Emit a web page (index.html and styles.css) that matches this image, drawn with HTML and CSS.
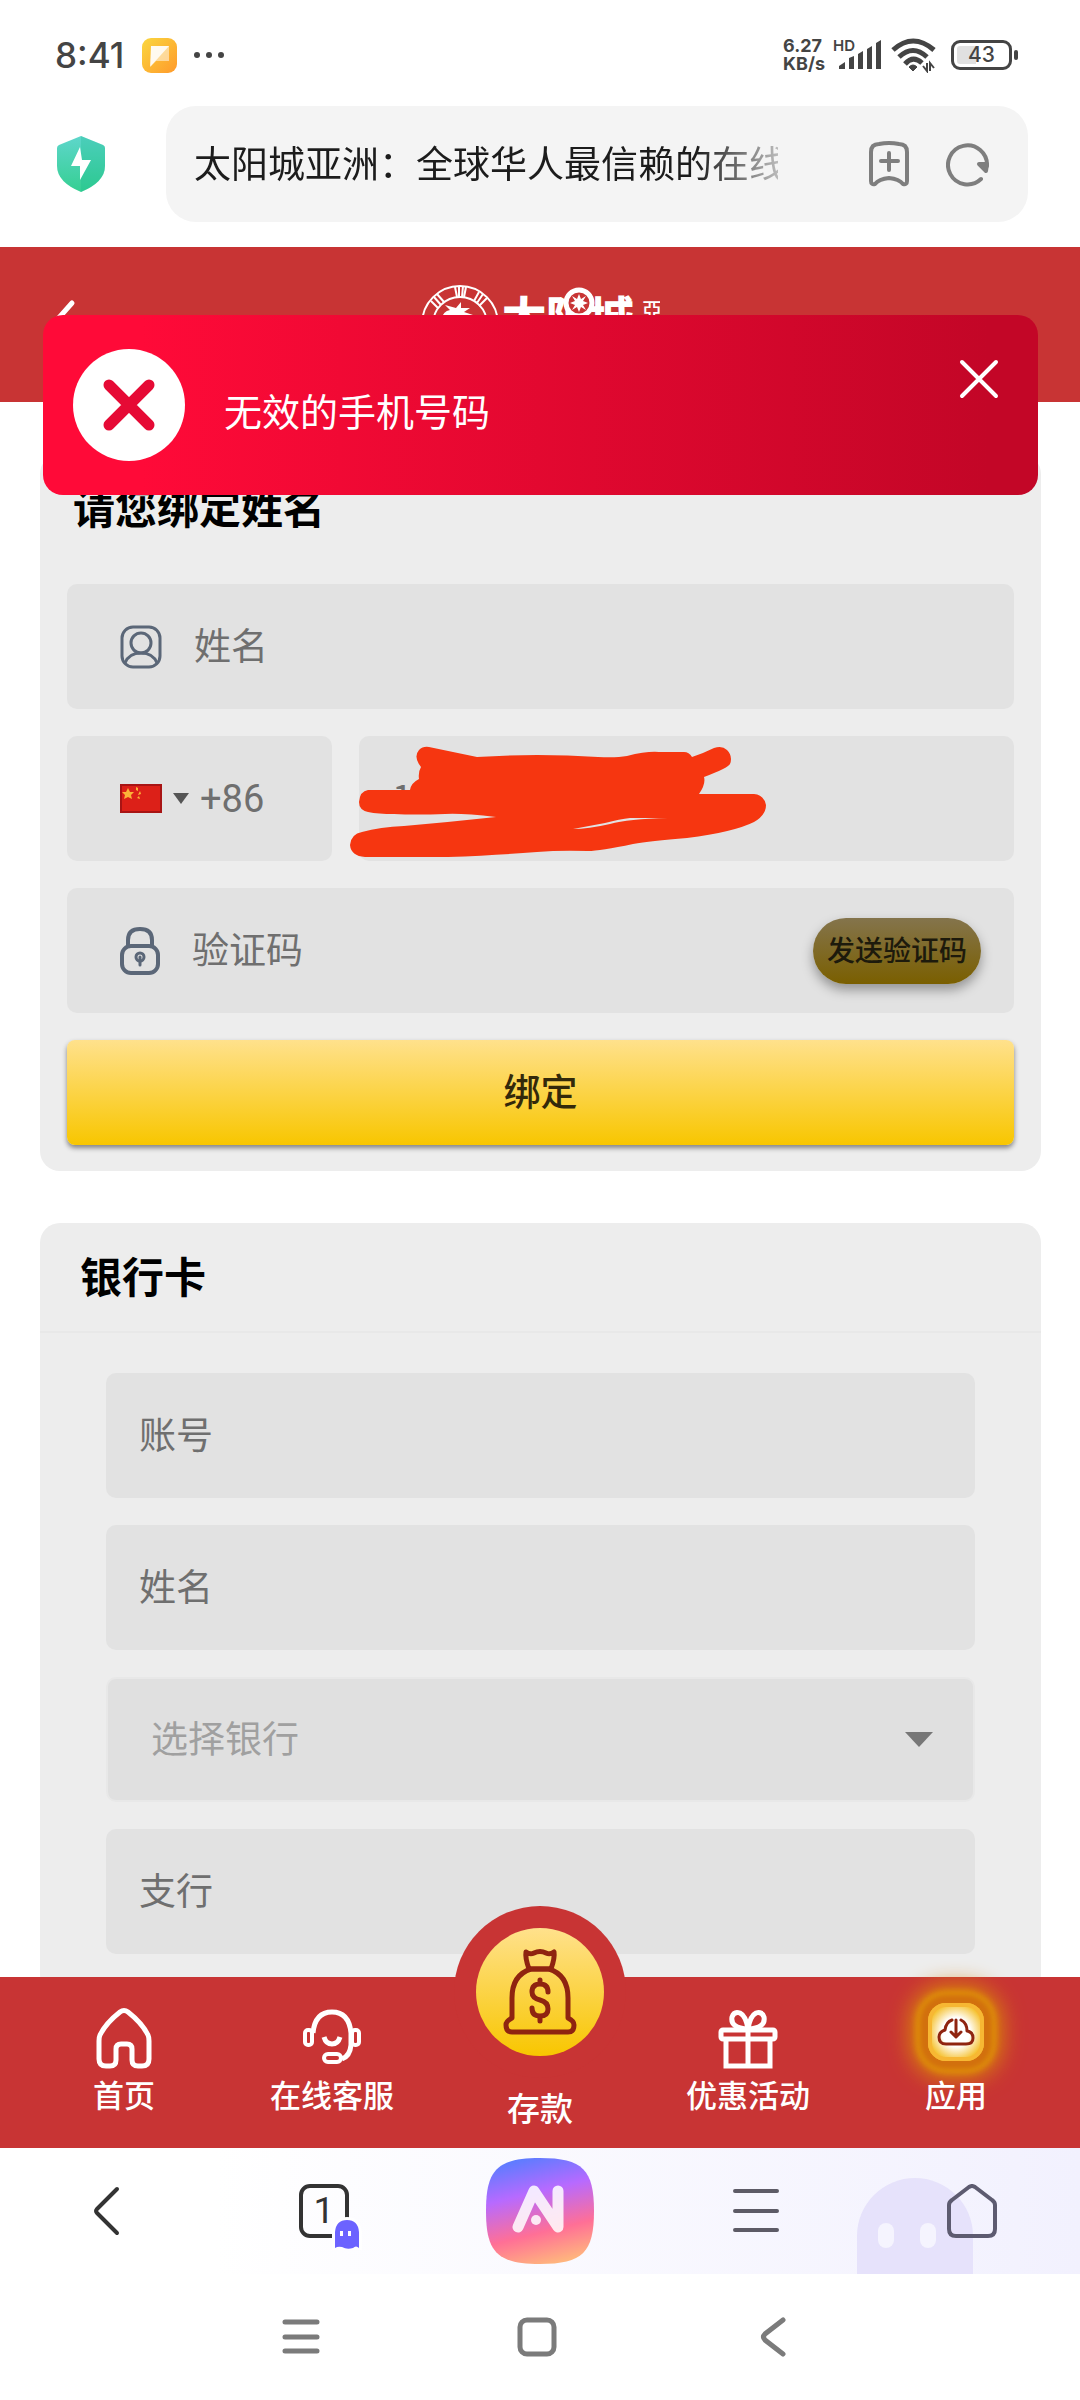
FILE: index.html
```
<!DOCTYPE html>
<html lang="zh-CN">

<head>
    <meta charset="utf-8">
    <meta name="viewport" content="width=device-width, initial-scale=1">
    <title>太阳城亚洲</title>
    <link rel="stylesheet" href="styles.css">
</head>

<body>
    <div class="status">
        <span class="time">8:41</span>
        <svg class="app-badge" width="35" height="35" viewBox="0 0 35 35">
            <defs>
                <linearGradient id="orange" x1="0" y1="0" x2="1" y2="1">
                    <stop offset="0" stop-color="#fad73f" />
                    <stop offset="1" stop-color="#ff9a2b" />
                </linearGradient>
            </defs>
            <rect width="35" height="35" rx="9" fill="url(#orange)" />
            <path d="M9 8h18v15H14L9 28z" fill="#fff" opacity=".5" />
            <path d="M9 8h18L8 29z" fill="#fff" opacity=".85" />
        </svg>
        <svg width="30" height="8" viewBox="0 0 30 8" fill="#444">
            <circle cx="3" cy="4" r="3" />
            <circle cx="15" cy="4" r="3" />
            <circle cx="27" cy="4" r="3" />
        </svg>
        <div class="status-right">
            <div class="speed"><span>6.27</span><span>KB/s</span></div>
            <svg class="signal" width="50" height="34" viewBox="0 0 50 34" fill="#444">
                <text class="hd" x="0" y="13">HD</text>
                <path d="M6 31v-3l6-4v7zM16 31V20l5-2v13zM25 31V16l5-3v18zM34 31V11l5-3v23zM43 31V5l5-3v29z" />
            </svg>
            <svg width="46" height="36" viewBox="0 0 46 36" fill="none" stroke="#444" stroke-width="5">
                <path d="M2 13Q22-5 43 13M8 20Q22 7 36 20M14 27Q22 18 31 26" />
                <path d="M18 30q4-4 8 0l-4 4z" fill="#444" stroke-width="1" />
                <path d="M36 26v8l-4-5M39 34v-8l4 5" stroke-width="2" />
            </svg>
            <div class="battery">43</div>
        </div>
    </div>

    <div class="address">
        <svg width="50" height="58" viewBox="0 0 50 58">
            <defs>
                <linearGradient id="green" x1="0" y1="0" x2="0" y2="1">
                    <stop offset="0" stop-color="#5ed6cb" />
                    <stop offset="1" stop-color="#35cf92" />
                </linearGradient>
            </defs>
            <path d="M25 1l22 9q2 1 2 3v18q0 16-24 26Q1 47 1 31V13q0-2 2-3z" fill="url(#green)" />
            <path d="M25 1l22 9q2 1 2 3v18q0 16-24 26z" fill="#12b98a" opacity=".25" />
            <path d="M24 12L15 31h9v14l11-20h-9z" fill="#fff" />
        </svg>
        <div class="address-box">
            <input class="address-text" type="text" aria-label="地址" value="太阳城亚洲：全球华人最信赖的在线">
            <button class="icon-btn" aria-label="收藏">
                <svg width="40" height="46" viewBox="0 0 40 46" fill="none" stroke="#7e7e7e" stroke-width="4" stroke-linecap="round" stroke-linejoin="round">
                    <path d="M10 3Q20 1 30 3q8 0 8 8v29q0 4-4 3-4-5-14-6-10 1-14 6-4 1-4-3V11q0-8 8-8zM20 12v17M12 20h17" />
                </svg>
            </button>
            <button class="icon-btn" aria-label="刷新">
                <svg width="44" height="46" viewBox="0 0 44 46" fill="none" stroke="#7e7e7e" stroke-width="4" stroke-linecap="round">
                    <path d="M35 38A19.500 19.500 0 1 1 41 25" />
                    <path d="M33 23l8 0-1 7z" fill="#7e7e7e" stroke-linejoin="round" />
                </svg>
            </button>
        </div>
    </div>

    <main class="page">
        <header class="site-header">
            <button class="icon-btn site-back" aria-label="返回">
                <svg width="24" height="44" viewBox="0 0 24 44" fill="none" stroke="#fff" stroke-width="5" stroke-linecap="round">
                    <path d="M20 4L4 22l16 18" />
                </svg>
            </button>
            <svg class="site-logo" width="240" height="80" viewBox="0 0 240 80">
                <g fill="none" stroke="#fff">
                    <circle cx="40" cy="40" r="38" stroke-width="2" />
                    <circle cx="40" cy="40" r="27" stroke-width="2" />
                    <path d="M35 3l2 10M39 2v11M43 2l-1 11M46 3l-2 10M14 13l7 8M17 10l7 8M11 17l7 7M59 8l-5 9M63 10l-6 9M67 14l-8 8" stroke-width="2" />
                </g>
                <path d="M21 36q2-9 9-10l-5-5 11 3 5-6 0 6 9 0-6 4 9 3 5 8-10-4-3 5-8-6-4 5-5-7z" fill="#fff" />
                <text class="logo-main" x="82" y="50">太阳城</text>
                <circle cx="159" cy="19" r="13" fill="#c83434" stroke="#fff" stroke-width="5" />
                <path d="M159 10l2 5 5-3-3 5 5 2-5 2 3 5-5-3-2 5-2-5-5 3 3-5-5-2 5-2-3-5 5 3z" fill="#fff" />
                <text class="logo-side" x="222" y="34">亞</text>
            </svg>
            <div class="toast" role="alert">
                <svg width="112" height="112" viewBox="0 0 112 112">
                    <circle cx="56" cy="56" r="56" fill="#fff" />
                    <path d="M36 36l40 40M76 36L36 76" stroke="#e60a35" stroke-width="11" stroke-linecap="round" />
                </svg>
                <span class="toast-text">无效的手机号码</span>
                <button class="icon-btn toast-close" aria-label="关闭">
                    <svg width="40" height="40" viewBox="0 0 40 40" stroke="#fff" stroke-width="4" stroke-linecap="round">
                        <path d="M3 3l34 34M37 3L3 37" />
                    </svg>
                </button>
            </div>
        </header>

        <section class="card bind">
            <h2>请您绑定姓名</h2>
            <form class="fields">
                <label class="field with-icon">
                    <svg width="42" height="44" viewBox="0 0 42 44" fill="none" stroke="#5b6778" stroke-width="3">
                        <rect x="2" y="2" width="38" height="40" rx="11" />
                        <ellipse cx="21" cy="18" rx="10" ry="10" />
                        <path d="M5 38q4-10 16-10t16 10" />
                    </svg>
                    <input type="text" aria-label="姓名" placeholder="姓名">
                </label>
                <div class="phone-row">
                    <button type="button" class="field country" aria-label="国家代码 +86">
                        <svg width="42" height="29" viewBox="0 0 42 29">
                            <rect width="42" height="29" fill="#a81414" />
                            <rect x="2" y="2" width="38" height="25" fill="#dc2018" />
                            <path d="M8 4l2 4h4l-3 3 1 4-4-2-4 2 1-4-3-3h4zM16 3l2 1v3l-2-1zM20 7l1 3-3 1zM19 12l1 3-3-1z" fill="#fcb338" />
                        </svg>
                        <svg width="16" height="11" viewBox="0 0 16 11"><path d="M0 0h16l-8 11z" fill="#555" /></svg>
                        <span class="code">+86</span>
                    </button>
                    <div class="field phone">
                        <input type="tel" aria-label="手机号码" value="1">
                        <svg class="scribble" width="420" height="124" viewBox="350 736 420 124">
                            <path fill="#f63610" fill-rule="evenodd" d="M419 750Q423 746 429 747L477 757Q537 753 598 757Q616 758 627 756Q647 751 659 752H684Q689 752 692 757Q704 753 714 748Q722 745 727 750Q733 756 730 764Q728 768 704 777Q706 784 699 794H754Q764 795 766 805Q766 815 754 822Q734 832 687 838Q650 841 633 844Q600 851 588 851Q560 850 537 852Q500 855 448 857H365Q351 856 350 845Q351 834 362 832Q380 827 404 826Q450 822 496 817Q462 813 445 814Q415 815 394 814Q378 814 368 812Q359 810 359 802Q360 791 368 790H410Q411 783 419 779Q418 772 421 767Q413 757 419 750ZM573 829Q588 829 610 824Q628 819 668 818H630Q620 819 605 823Z" />
                        </svg>
                    </div>
                </div>
                <div class="field with-icon">
                    <svg width="40" height="48" viewBox="0 0 40 48" fill="none" stroke="#5b6778" stroke-width="4">
                        <rect x="2" y="19" width="36" height="27" rx="9" />
                        <path d="M8 19v-6Q8 2 20 2t12 11v6" />
                        <path d="M20 30v8" stroke-linecap="round" stroke-width="3" />
                        <circle cx="20" cy="30" r="4" stroke-width="3" />
                    </svg>
                    <input type="text" aria-label="验证码" placeholder="验证码">
                    <button type="button" class="send">发送验证码</button>
                </div>
                <button type="button" class="submit">绑定</button>
            </form>
        </section>

        <section class="card bank">
            <h2>银行卡</h2>
            <form class="fields">
                <div class="field"><input type="text" aria-label="账号" placeholder="账号"></div>
                <div class="field"><input type="text" aria-label="姓名" placeholder="姓名"></div>
                <div class="field bank-select">
                    <select aria-label="选择银行">
                        <option>选择银行</option>
                    </select>
                    <svg width="28" height="15" viewBox="0 0 28 15"><path d="M0 0h28L14 15z" fill="#777" /></svg>
                </div>
                <div class="field"><input type="text" aria-label="支行" placeholder="支行"></div>
            </form>
        </section>
    </main>

    <nav class="tabs">
        <a href="#home">
            <svg width="60" height="62" viewBox="0 0 60 62" fill="none" stroke="#fff" stroke-width="5" stroke-linejoin="round">
                <path d="M26 5q4-3 8 0 14 11 20 23 1 2 1 6v18q0 7-7 7h-4q-6 0-6-6V42q0-5-5-5h-6q-5 0-5 5v11q0 6-6 6h-4q-7 0-7-7V34q0-4 1-6Q12 16 26 5z" />
            </svg>
            <span>首页</span>
        </a>
        <a href="#service">
            <svg width="60" height="62" viewBox="0 0 60 62" fill="none" stroke="#fff" stroke-width="4">
                <path d="M11 26Q13 5 30 5t19 21v12q-1 11-9 14" stroke-width="5" />
                <rect x="3" y="23" width="7" height="15" rx="3" />
                <rect x="50" y="23" width="7" height="15" rx="3" />
                <path d="M22 30q2 7 8 7t8-7" stroke-width="5" />
                <rect x="22" y="47" width="17" height="8" rx="4" />
            </svg>
            <span>在线客服</span>
        </a>
        <a href="#deposit" class="deposit">
            <span class="bump">
                <svg width="128" height="128" viewBox="0 0 128 128" fill="none" stroke="#8f2410" stroke-width="5" stroke-linecap="round" stroke-linejoin="round">
                    <path d="M53 41Q49 30 50 24q4 3 8 1 6-3 12 0 4 2 8-1 1 6-3 17M55 41h18" />
                    <path d="M55 41Q36 47 36 70v20q-6 3-6 7 0 7 6 7h56q6 0 6-7 0-4-6-7V70q0-23-19-29z" />
                    <path d="M72 64q0-8-8-8t-8 8q0 6 8 8t8 9q0 7-8 7t-8-8M64 52v4M64 88v5" />
                </svg>
            </span>
            <span>存款</span>
        </a>
        <a href="#offers">
            <svg width="60" height="62" viewBox="0 0 60 62" fill="none" stroke="#fff" stroke-width="5">
                <rect x="3" y="23" width="54" height="9" rx="2" />
                <path d="M8 32v27h44V32M30 23v36M30 22Q12 21 14 10q2-6 8-4 6 3 8 16Q32 9 38 6q6-2 8 4 2 11-16 12z" />
            </svg>
            <span>优惠活动</span>
        </a>
        <a href="#apps">
            <span class="apps">
                <svg width="38" height="30" viewBox="0 0 38 30" fill="none" stroke="#8f2410" stroke-width="3" stroke-linecap="round" stroke-linejoin="round">
                    <path d="M15 3Q9 5 8 13q-6 2-6 7 0 7 7 7h20q7 0 7-6t-6-7q0-8-6-11" />
                    <path d="M19 3v16M14 15l5 5 5-5" />
                </svg>
            </span>
            <span>应用</span>
        </a>
    </nav>

    <div class="browser-bar">
        <svg class="watermark" width="116" height="96" viewBox="0 0 116 96">
            <path d="M0 96V58a58 58 0 0 1 116 0v38z" fill="#e6e2fb" />
            <rect x="21" y="45" width="16" height="25" rx="8" fill="#f5f4fe" />
            <rect x="63" y="45" width="16" height="25" rx="8" fill="#f5f4fe" />
        </svg>
        <button class="icon-btn" aria-label="后退">
            <svg width="28" height="52" viewBox="0 0 28 52" fill="none" stroke="#333" stroke-width="4" stroke-linecap="round">
                <path d="M23 4L3 24q-2 2 0 4l20 20" />
            </svg>
        </button>
        <button class="icon-btn tab-count" aria-label="标签页 1">
            <span>1</span>
            <svg width="30" height="34" viewBox="0 0 30 34">
                <path d="M0 34V16Q2 1 15 1t15 15v18z" fill="#fff" />
                <path d="M3 32V16Q4 4 15 4t12 12v16q-3-3-6 0-6 2-11-1-4-1-7 1z" fill="#6c63ff" />
                <path d="M8 15h3v5H8zM16 15h3v5h-3z" fill="#fff" />
            </svg>
        </button>
        <button class="icon-btn" aria-label="AI">
            <svg width="110" height="108" viewBox="0 0 110 108">
                <defs>
                    <linearGradient id="sunset" x1=".35" y1="0" x2=".6" y2="1">
                        <stop offset="0" stop-color="#5c7cff" />
                        <stop offset=".33" stop-color="#b76aff" />
                        <stop offset=".7" stop-color="#ff6f96" />
                        <stop offset="1" stop-color="#ffb57e" />
                    </linearGradient>
                </defs>
                <path d="M55 1c43 0 54 12 54 53s-11 53-54 53S1 95 1 54 12 1 55 1z" fill="url(#sunset)" />
                <path d="M33 70L49 34l24 36V34" fill="none" stroke="#fff" stroke-width="11" stroke-linecap="round" stroke-linejoin="round" opacity=".85" />
                <circle cx="51" cy="63" r="5" fill="#fff" opacity=".85" />
            </svg>
        </button>
        <button class="icon-btn" aria-label="菜单">
            <svg width="46" height="46" viewBox="0 0 46 46" stroke="#5d5b66" stroke-width="4" stroke-linecap="round">
                <path d="M2 3h42M2 23h42M2 42h42" />
            </svg>
        </button>
        <button class="icon-btn" aria-label="主页">
            <svg width="50" height="54" viewBox="0 0 50 54" fill="none" stroke="#5d5b70" stroke-width="4" stroke-linejoin="round">
                <path d="M22 3q3-2 6 0l17 13q3 2 3 5v24q0 7-7 7H9q-7 0-7-7V21q0-3 3-5z" />
            </svg>
        </button>
    </div>

    <div class="system-bar">
        <button class="icon-btn" aria-label="最近任务">
            <svg width="38" height="38" viewBox="0 0 38 38" stroke="#7b7b7b" stroke-width="5" stroke-linecap="round">
                <path d="M3 4h32M3 19h32M3 33h32" />
            </svg>
        </button>
        <button class="icon-btn" aria-label="桌面">
            <svg width="40" height="40" viewBox="0 0 40 40" fill="none" stroke="#7b7b7b" stroke-width="5">
                <rect x="3" y="3" width="34" height="34" rx="7" />
            </svg>
        </button>
        <button class="icon-btn" aria-label="返回上一级">
            <svg width="26" height="40" viewBox="0 0 26 40" fill="none" stroke="#7b7b7b" stroke-width="5" stroke-linecap="round">
                <path d="M23 3L5 17q-3 3 0 6l18 14" />
            </svg>
        </button>
    </div>
</body>

</html>
```
FILE: styles.css
```
* {
    box-sizing: border-box;
}

body {
    margin: 0;
    height: 100vh;
    display: flex;
    flex-direction: column;
    background-color: #fff;
    font-family: "Noto Sans CJK SC", sans-serif;
    font-size: 37px;
    color: #6f6f6f;
}

svg {
    display: block;
    flex: none;
}

input, select, button {
    font: inherit;
    color: inherit;
    border: none;
    outline: none;
    background: none;
    padding: 0;
    margin: 0;
}

input, select {
    flex: 1;
    min-width: 0;
    padding-bottom: 5px;
    appearance: none;
}

input::placeholder {
    color: #6f6f6f;
    opacity: 1;
}

.icon-btn {
    display: flex;
    align-items: center;
    justify-content: center;
}

/* phone status line */
.status {
    flex: none;
    display: flex;
    align-items: center;
    height: 106px;
    padding: 4px 68px 0 55px;
    color: #444;
}

.time {
    font-family: Inter, sans-serif;
    font-size: 35px;
    font-weight: 500;
}

.app-badge {
    margin: 0 17px 0 18px;
}

.status-right {
    display: flex;
    align-items: center;
    gap: 8px;
    margin-left: auto;
}

.speed {
    display: flex;
    flex-direction: column;
    font-family: Inter, sans-serif;
    font-size: 18px;
    font-weight: 700;
    line-height: 18px;
}

.signal {
    overflow: visible;
}

.hd {
    font-family: Inter, sans-serif;
    font-size: 15px;
    font-weight: 600;
}

.battery {
    position: relative;
    width: 61px;
    height: 30px;
    margin-left: 6px;
    border: 3px solid #444;
    border-radius: 9px;
    background: linear-gradient(90deg, #e0e0e0 40%, #fff 40%);
    box-shadow: inset 0 0 0 3px #fff;
    font-family: Inter, sans-serif;
    font-size: 21px;
    font-weight: 500;
    line-height: 24px;
    text-align: center;
}

.battery::after {
    content: "";
    position: absolute;
    right: -9px;
    top: 7px;
    width: 4px;
    height: 10px;
    border-radius: 2px;
    background-color: #444;
}

/* address bar */
.address {
    flex: none;
    display: flex;
    align-items: center;
    gap: 60px;
    padding: 0 52px 25px 56px;
}

.address-box {
    flex: 1;
    display: flex;
    align-items: center;
    gap: 37px;
    height: 116px;
    padding: 0 38px 0 28px;
    border-radius: 30px;
    background-color: #f4f4f4;
}

.address-text {
    margin-right: 54px;
    color: #1c1c1c;
    -webkit-mask-image: linear-gradient(90deg, #000 86%, transparent 105%);
    mask-image: linear-gradient(90deg, #000 86%, transparent 105%);
}

/* web page */
.page {
    flex: 1;
    min-height: 0;
    overflow: hidden;
}

.site-header {
    position: relative;
    display: flex;
    justify-content: center;
    height: 155px;
    padding-top: 37px;
    background-color: #c83434;
}

.site-back {
    position: absolute;
    left: 52px;
    top: 52px;
}

.logo-main {
    font-size: 44px;
    font-weight: 900;
    fill: #fff;
}

.logo-side {
    font-size: 20px;
    font-weight: 500;
    fill: #fff;
}

.toast {
    position: absolute;
    top: 68px;
    left: 43px;
    right: 42px;
    display: flex;
    align-items: center;
    gap: 39px;
    height: 180px;
    padding: 0 39px 0 30px;
    border-radius: 20px;
    background: linear-gradient(90deg, #ff0a38 10%, #c30627 95%);
    font-size: 38px;
    color: #fff;
}

.toast-text {
    padding-top: 8px;
}

.toast-close {
    align-self: flex-start;
    margin: 44px 0 0 auto;
}

.card {
    margin: 52px 39px 0 40px;
    border-radius: 20px;
    background-color: #ededed;
}

.card h2 {
    margin: 0;
    padding: 0 40px 4px;
    font-size: 42px;
    font-weight: 700;
    line-height: 104px;
    color: #000;
}

.card.bind h2 {
    padding: 0 33px 4px;
}

.bank h2 {
    border-bottom: 2px solid #e8e8e8;
}

.fields {
    display: flex;
    flex-direction: column;
    gap: 27px;
}

.bind .fields {
    padding: 22px 27px 26px;
}

.bank .fields {
    padding: 40px 66px;
}

.field {
    display: flex;
    align-items: center;
    height: 125px;
    padding: 0 33px;
    border-radius: 10px;
    background-color: #e2e2e2;
}

.with-icon {
    gap: 32px;
    padding-left: 53px;
}

.phone-row {
    display: flex;
    gap: 27px;
}

.country {
    gap: 11px;
    width: 265px;
    padding: 0 50px 0 53px;
}

.code {
    font-family: Roboto, sans-serif;
    font-size: 38px;
}

.phone {
    flex: 1;
    position: relative;
}

.scribble {
    position: absolute;
    left: -9px;
    top: 0;
}

.send {
    height: 66px;
    padding: 0 14px 4px;
    border-radius: 33px;
    background: linear-gradient(#84744c, #7a5f00);
    box-shadow: 0 6px 12px rgba(0, 0, 0, 0.35);
    font-size: 28px;
    font-weight: 500;
    color: #1d1a0c;
}

.submit {
    height: 105px;
    padding-bottom: 5px;
    border-radius: 8px;
    background: linear-gradient(#ffe18c, #f8c600);
    box-shadow: 0 3px 5px rgba(0, 0, 0, 0.45);
    font-weight: 500;
    color: #33290a;
}

.bank-select {
    padding: 0 40px 0 43px;
    border: 2px solid #e8e8e8;
    background-color: #e0e0e0;
    color: #a0a0a0;
}

/* site tabs */
.tabs {
    flex: none;
    position: relative;
    display: flex;
    height: 171px;
    padding: 0 20px;
    background-color: #c83434;
}

.tabs a {
    flex: 1;
    display: flex;
    flex-direction: column;
    align-items: center;
    gap: 9px;
    padding-top: 30px;
    font-size: 31px;
    font-weight: 500;
    line-height: 32px;
    color: #fff;
    text-decoration: none;
}

.tabs .deposit {
    gap: 13px;
    padding-top: 0;
    font-size: 33px;
}

.bump {
    margin-top: -71px;
    padding: 22px;
    border-radius: 50%;
    background-color: #c83434;
}

.bump svg {
    border-radius: 50%;
    background: linear-gradient(#ffe18c, #f8c600);
}

.apps {
    display: flex;
    align-items: center;
    justify-content: center;
    width: 56px;
    height: 58px;
    margin: -4px 0 8px;
    border-radius: 18px;
    background: radial-gradient(#fff 35%, #f5c02c 72%);
    box-shadow: inset 0 0 0 4px #f7b733, 0 0 5px 8px #d2700e, 0 0 6px 12px #e0920a, 0 0 22px 18px #d8860c;
}

/* browser buttons */
.browser-bar {
    flex: none;
    position: relative;
    display: flex;
    height: 126px;
    background: linear-gradient(90deg, #fff 20%, #f2f1fe);
}

.browser-bar .icon-btn {
    flex: 1;
    position: relative;
}

.watermark {
    position: absolute;
    right: 107px;
    bottom: 0;
}

.tab-count span {
    width: 50px;
    height: 54px;
    border: 4px solid #333;
    border-radius: 11px;
    font-family: Roboto, sans-serif;
    font-size: 37px;
    line-height: 46px;
    color: #333;
}

.tab-count svg {
    position: absolute;
    left: calc(50% + 8px);
    top: 68px;
}

/* system buttons */
.system-bar {
    flex: none;
    display: flex;
    justify-content: center;
    height: 126px;
    padding-right: 6px;
}

.system-bar .icon-btn {
    width: 236px;
}
```
